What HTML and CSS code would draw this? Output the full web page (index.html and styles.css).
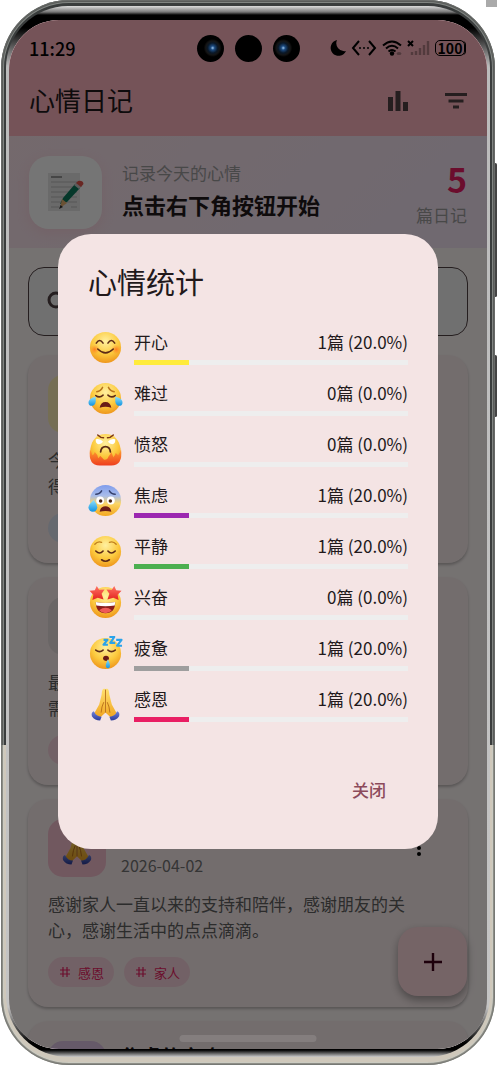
FILE: index.html
```html
<!DOCTYPE html>
<html lang="zh-CN">

<head>
    <meta charset="UTF-8">
    <meta name="viewport" content="width=device-width, initial-scale=1.0">
    <title>心情日记</title>
    <link rel="stylesheet" href="styles.css">
</head>

<body>
<!-- Emoji symbols -->
<svg class="sprites" aria-hidden="true">
    <defs>
        <radialGradient id="gFace" cx="50%" cy="30%" r="70%">
            <stop offset="0" stop-color="#fff0a0"/>
            <stop offset=".6" stop-color="#fcca3e"/>
            <stop offset="1" stop-color="#ee961c"/>
        </radialGradient>
        <radialGradient id="gBlush">
            <stop offset="0" stop-color="#ff6a1a" stop-opacity=".8"/>
            <stop offset="1" stop-color="#ff8a2a" stop-opacity="0"/>
        </radialGradient>
        <linearGradient id="gCold" x1="0" y1="0" x2="0" y2="1">
            <stop offset="0" stop-color="#7f9cec"/>
            <stop offset=".35" stop-color="#a9bdea"/>
            <stop offset=".6" stop-color="#fbd565"/>
            <stop offset="1" stop-color="#f3a820"/>
        </linearGradient>
        <linearGradient id="gRage" x1="0" y1="0" x2="0" y2="1">
            <stop offset="0" stop-color="#ffa030"/>
            <stop offset="1" stop-color="#ee3d1e"/>
        </linearGradient>
        <linearGradient id="gTear" x1="0" y1="0" x2="0" y2="1">
            <stop offset="0" stop-color="#8fe0fb"/>
            <stop offset="1" stop-color="#1294e0"/>
        </linearGradient>
        <linearGradient id="gStar" x1="0" y1="0" x2="0" y2="1">
            <stop offset="0" stop-color="#ff7464"/>
            <stop offset="1" stop-color="#e3221f"/>
        </linearGradient>
        <linearGradient id="gHand" x1="0" y1="0" x2="0" y2="1">
            <stop offset="0" stop-color="#ffe06e"/>
            <stop offset="1" stop-color="#f0a31e"/>
        </linearGradient>
        <linearGradient id="gCuff" x1="0" y1="0" x2="0" y2="1">
            <stop offset="0" stop-color="#6f83dc"/>
            <stop offset="1" stop-color="#2b3a9a"/>
        </linearGradient>
    </defs>

    <symbol id="happy" viewBox="0 0 36 36">
        <circle cx="18" cy="18" r="16" fill="url(#gFace)"/>
        <circle cx="7" cy="20" r="5" fill="url(#gBlush)"/>
        <circle cx="29" cy="20" r="5" fill="url(#gBlush)"/>
        <path d="M8.500 13.500Q12 8 15.500 13.500M20.500 13.500Q24 8 27.500 13.500M10 19.500Q18 27.500 26 19.500" fill="none" stroke="#5c2a16" stroke-width="1.600" stroke-linecap="round"/>
    </symbol>

    <symbol id="sad" viewBox="0 0 36 36">
        <circle cx="18" cy="18" r="16" fill="url(#gFace)"/>
        <path d="M9 11Q13 10.500 15 6.500M27 11Q23 10.500 21 6.500" fill="none" stroke="#b8741c" stroke-width="1.500" stroke-linecap="round"/>
        <path d="M8 15Q12 18 15.500 14.500M28 15Q24 18 20.500 14.500" fill="none" stroke="#5c2a16" stroke-width="1.600" stroke-linecap="round"/>
        <path d="M12 27.500Q13 21.500 18 21.500T24 27.500Q18 25.500 12 27.500Z" fill="#6a1b16"/>
        <path d="M8 16C4 17 .5 19 .5 22.500C1 27 7.500 26.500 8 21Z" fill="url(#gTear)"/>
        <path d="M28 16C32 17 35.500 19 35.500 22.500C35 27 28.500 26.500 28 21Z" fill="url(#gTear)"/>
    </symbol>

    <symbol id="angry" viewBox="0 0 36 36">
        <path d="M18 2C9 2 4 8 2.500 17C1 28 4 33 13 34H23C32 33 35 28 33.500 17C32 8 27 2 18 2Z" fill="url(#gFace)"/>
        <path d="M2 18Q4 21 4.500 24Q6.500 23 7 20.500Q10 23 10.500 27Q12 26 12.500 24.500Q15 27 16.500 28.500Q20 29 21 25.500Q23 23 24 20.500Q25.500 24 26 26Q28 24 28.500 21.500Q30.500 23 31 24Q33 21 34 18Q36 34.500 24 34.500H12Q0 34.500 2 18Z" fill="url(#gRage)"/>
        <path d="M8 7.500Q13 6.500 15.500 10Q14 12.500 11 12.500Q7.500 12 8 7.500ZM28 7.500Q23 6.500 20.500 10Q22 12.500 25 12.500Q28.500 12 28 7.500Z" fill="#fff"/>
        <path d="M10 3Q13 6 16 6M26 3Q23 6 20 6" fill="none" stroke="#7a3414" stroke-width="1.500" stroke-linecap="round"/>
        <path d="M13 20.500Q13.500 15 18 15T23 20.500" fill="none" stroke="#5c2a16" stroke-width="1.800" stroke-linecap="round"/>
    </symbol>

    <symbol id="anxious" viewBox="0 0 36 36">
        <circle cx="18" cy="18" r="16" fill="url(#gCold)"/>
        <path d="M8 11.500Q12 11.500 14 8M28 11.500Q24 11.500 22 8" fill="none" stroke="#35406c" stroke-width="1.500" stroke-linecap="round"/>
        <circle cx="12.500" cy="18" r="4" fill="#fff"/>
        <circle cx="23.500" cy="18" r="4" fill="#fff"/>
        <circle cx="13" cy="18.500" r="1.800" fill="#4a2412"/>
        <circle cx="23" cy="18.500" r="1.800" fill="#4a2412"/>
        <path d="M12 29.500Q13 24 18 24T24 29.500Q18 28 12 29.500Z" fill="#6a1b16"/>
        <path d="M6 17.500Q.500 22 .500 25A4.500 4.500 0 0 0 9.500 25Q9 21 6 17.500Z" fill="url(#gTear)"/>
    </symbol>

    <symbol id="calm" viewBox="0 0 36 36">
        <circle cx="18" cy="18" r="16" fill="url(#gFace)"/>
        <path d="M7 10.500Q10 7 14 8.500M29 10.500Q26 7 22 8.500" fill="none" stroke="#c0801e" stroke-width="1.400" stroke-linecap="round"/>
        <path d="M8 17.500Q12 21.500 15.500 17.500M20.500 17.500Q24 21.500 28 17.500M14 26.500Q18 29.500 22 26.500" fill="none" stroke="#5c2a16" stroke-width="1.700" stroke-linecap="round"/>
    </symbol>

    <symbol id="excited" viewBox="0 0 36 36">
        <circle cx="18" cy="18" r="16" fill="url(#gFace)"/>
        <path d="M8 17.500Q18 19.500 28 17.500Q28 29 18 29T8 17.500Z" fill="#8a1f1c"/>
        <path d="M8 17.500Q18 19.500 28 17.500L27.500 21Q18 22.500 8.500 21Z" fill="#fff"/>
        <path d="M11.500 26Q18 21 24.500 26Q22 29 18 29T11.500 26Z" fill="#ee5a58"/>
        <path d="M9 1L11.500 5L17 4.500L14 9L16 15L10 13L4.500 15.500L5.500 10L1.500 6L7 5.500Z" fill="url(#gStar)"/>
        <path d="M27 1L24.500 5L19 4.500L22 9L20 15L26 13L31.500 15.500L30.500 10L34.500 6L29 5.500Z" fill="url(#gStar)"/>
    </symbol>

    <symbol id="tired" viewBox="0 0 36 36">
        <circle cx="18" cy="18" r="16" fill="url(#gFace)"/>
        <path d="M8 14.500Q12 17.500 15.500 14.500M20.500 14.500Q24 17.500 28 14.500" fill="none" stroke="#5c2a16" stroke-width="1.700" stroke-linecap="round"/>
        <ellipse cx="18.500" cy="23" rx="3" ry="2.600" fill="#6a1b16"/>
        <path d="M20.500 24Q17.500 30 18.500 32Q20.500 34.500 22.500 32Q23 29 20.500 24Z" fill="url(#gTear)"/>
        <path d="M16 4H20L16 9H20.500M22 1H27L23 7H28M29 4H34.500L30 10H35" fill="none" stroke="#2aa3ea" stroke-width="2.200" stroke-linejoin="round"/>
    </symbol>

    <symbol id="thanks" viewBox="0 0 36 36">
        <path d="M17.800 2C15 1.500 14.500 3 14 8L11.500 18L6.500 27L12 32L17.800 26.500Z" fill="url(#gHand)"/>
        <path d="M18.200 2C21 1.500 21.500 3 22 8L24.500 18L29.500 27L24 32L18.200 26.500Z" fill="url(#gHand)"/>
        <path d="M18 3V26M16 16Q14 20 13.500 26M20 16Q22 20 22.500 26" fill="none" stroke="#b46a14" stroke-width=".900" stroke-linecap="round"/>
        <path d="M6 25Q3 26 4 30Q7 34.500 12.500 34.500L14 30.500Q8.500 30.500 6 25Z" fill="url(#gCuff)"/>
        <path d="M30 25Q33 26 32 30Q29 34.500 23.500 34.500L22 30.500Q27.500 30.500 30 25Z" fill="url(#gCuff)"/>
    </symbol>

    <symbol id="hash" viewBox="0 0 14 14">
        <path d="M5 2V12M9 2V12M2 5H12M2 9H12" fill="none" stroke="currentColor" stroke-width="1.200"/>
    </symbol>

    <symbol id="more" viewBox="0 0 20 20">
        <circle cx="10" cy="4" r="2"/>
        <circle cx="10" cy="10" r="2"/>
        <circle cx="10" cy="16" r="2"/>
    </symbol>
</svg>

<div class="edge-mark"></div>
<div class="side-key volume"></div>
<div class="side-key power"></div>

<div class="phone">
    <div class="bezel">
        <div class="screen">
            <header class="header">
                <div class="status-bar">
                    <span class="time">11:29</span>
                    <div class="status-icons">
                        <svg width="16" height="18" viewBox="0 0 16 18"><path d="M7 1A8 8 0 1 0 16 12A8 8 0 0 1 7 1Z"/></svg>
                        <svg width="26" height="18" viewBox="0 0 26 18"><path d="M8 2L2 9L8 16M18 2L24 9L18 16" fill="none" stroke="#000" stroke-width="2"/><circle cx="9" cy="9" r="1"/><circle cx="13" cy="9" r="1"/><circle cx="17" cy="9" r="1"/></svg>
                        <svg width="20" height="18" viewBox="0 0 20 18"><path d="M1 6.500Q10 -1.500 19 6.500M4 9.500Q10 4 16 9.500M6.500 12.500Q10 9.500 13.500 12.500" fill="none" stroke="#000" stroke-width="2"/><circle cx="10" cy="14.500" r="2.200"/><ellipse cx="17" cy="14.500" rx="2.500" ry="1.500" opacity=".3"/></svg>
                        <svg width="23" height="18" viewBox="0 0 23 18"><path d="M1 2L6 7M6 2L1 7" stroke="#000" stroke-width="2"/><path d="M5 13V16M9 12V16M13 9V16M17 6V16M21 2V16" stroke="#000" stroke-width="2.400" opacity=".3"/></svg>
                        <span class="battery">100</span>
                    </div>
                </div>
                <div class="app-bar">
                    <h1>心情日记</h1>
                    <button class="icon-btn" aria-label="心情统计">
                        <svg width="20" height="20" viewBox="0 0 20 20"><path d="M0 6H5V20H0ZM7.500 0H12.500V20H7.500ZM15 11H20V20H15Z"/></svg>
                    </button>
                    <button class="icon-btn" aria-label="筛选">
                        <svg width="22" height="16" viewBox="0 0 22 16"><path d="M0 0H22V3H0ZM3.500 6.500H18.500V9.500H3.500ZM8 12.500H14V15.500H8Z"/></svg>
                    </button>
                </div>
            </header>

            <section class="banner">
                <div class="banner-icon">
                    <svg width="38" height="40" viewBox="0 0 38 40">
                        <rect x="1" y="1" width="32" height="38" fill="#e6e6e6"/>
                        <path d="M4 5H15" stroke="#999" stroke-width="2"/>
                        <path d="M4 10H30M4 15H30M4 20H30M4 25H30M4 30H30M4 35H12M24 35H30" stroke="#bdbdbd"/>
                        <path d="M13 32L16 26L28 12L33 16L20 30Z" fill="#0c7a5c"/>
                        <path d="M13 36L15 27L20 31Z" fill="#e8b070"/>
                        <path d="M12 37L13.500 33L16 35Z" fill="#333"/>
                        <path d="M27 13L30 9.500L35 14L32 17Z" fill="#c8c8c8"/>
                        <path d="M29 11L31 9Q36 8 36.500 12L34 15Z" fill="#e5564c"/>
                    </svg>
                </div>
                <div class="banner-text">
                    <p class="hint">记录今天的心情</p>
                    <h2>点击右下角按钮开始</h2>
                </div>
                <div class="banner-count">
                    <strong>5</strong>
                    <span>篇日记</span>
                </div>
            </section>

            <main class="content">
                <label class="search">
                    <svg width="22" height="22" viewBox="0 0 22 22"><circle cx="9" cy="9" r="7"/><path d="M14 14L20 20"/></svg>
                    <input type="search" aria-label="搜索">
                </label>

                <article class="card">
                    <div class="card-head">
                        <div class="avatar yellow"></div>
                    </div>
                    <p class="card-body">今<br>得</p>
                    <div class="chips"><span class="chip blue"></span></div>
                </article>

                <article class="card">
                    <div class="card-head">
                        <div class="avatar gray"></div>
                    </div>
                    <p class="card-body">最<br>需</p>
                    <div class="chips"><span class="chip"></span></div>
                </article>

                <article class="card">
                    <div class="card-head">
                        <div class="avatar pink"><svg width="36" height="36"><use href="#thanks"/></svg></div>
                        <div class="card-title">
                            <h3></h3>
                            <time>2026-04-02</time>
                        </div>
                        <button class="more-btn" aria-label="更多"><svg width="20" height="20"><use href="#more"/></svg></button>
                    </div>
                    <p class="card-body">感谢家人一直以来的支持和陪伴，感谢朋友的关<br>心，感谢生活中的点点滴滴。</p>
                    <div class="chips">
                        <span class="chip"><svg width="14" height="14"><use href="#hash"/></svg>感恩</span>
                        <span class="chip"><svg width="14" height="14"><use href="#hash"/></svg>家人</span>
                    </div>
                </article>

                <article class="card">
                    <div class="card-head">
                        <div class="avatar purple"></div>
                        <div class="card-title">
                            <h3>焦虑的夜晚</h3>
                        </div>
                    </div>
                </article>
            </main>

            <button class="fab" aria-label="写日记">
                <svg width="18" height="18" viewBox="0 0 18 18"><path d="M9 0V18M0 9H18" stroke="currentColor" stroke-width="2.400"/></svg>
            </button>

            <!-- Statistics dialog -->
            <div class="scrim">
                <div class="dialog" role="dialog" aria-labelledby="statsTitle">
                    <h2 id="statsTitle">心情统计</h2>
                    <ul class="stats">
                        <li class="stat">
                            <svg class="emoji"><use href="#happy"/></svg>
                            <div class="stat-info">
                                <div class="stat-label"><span>开心</span><span>1篇 (20.0%)</span></div>
                                <div class="bar"><div class="fill happy" style="width: 20%"></div></div>
                            </div>
                        </li>
                        <li class="stat">
                            <svg class="emoji"><use href="#sad"/></svg>
                            <div class="stat-info">
                                <div class="stat-label"><span>难过</span><span>0篇 (0.0%)</span></div>
                                <div class="bar"></div>
                            </div>
                        </li>
                        <li class="stat">
                            <svg class="emoji"><use href="#angry"/></svg>
                            <div class="stat-info">
                                <div class="stat-label"><span>愤怒</span><span>0篇 (0.0%)</span></div>
                                <div class="bar"></div>
                            </div>
                        </li>
                        <li class="stat">
                            <svg class="emoji"><use href="#anxious"/></svg>
                            <div class="stat-info">
                                <div class="stat-label"><span>焦虑</span><span>1篇 (20.0%)</span></div>
                                <div class="bar"><div class="fill anxious" style="width: 20%"></div></div>
                            </div>
                        </li>
                        <li class="stat">
                            <svg class="emoji"><use href="#calm"/></svg>
                            <div class="stat-info">
                                <div class="stat-label"><span>平静</span><span>1篇 (20.0%)</span></div>
                                <div class="bar"><div class="fill calm" style="width: 20%"></div></div>
                            </div>
                        </li>
                        <li class="stat">
                            <svg class="emoji"><use href="#excited"/></svg>
                            <div class="stat-info">
                                <div class="stat-label"><span>兴奋</span><span>0篇 (0.0%)</span></div>
                                <div class="bar"></div>
                            </div>
                        </li>
                        <li class="stat">
                            <svg class="emoji"><use href="#tired"/></svg>
                            <div class="stat-info">
                                <div class="stat-label"><span>疲惫</span><span>1篇 (20.0%)</span></div>
                                <div class="bar"><div class="fill tired" style="width: 20%"></div></div>
                            </div>
                        </li>
                        <li class="stat">
                            <svg class="emoji"><use href="#thanks"/></svg>
                            <div class="stat-info">
                                <div class="stat-label"><span>感恩</span><span>1篇 (20.0%)</span></div>
                                <div class="bar"><div class="fill thanks" style="width: 20%"></div></div>
                            </div>
                        </li>
                    </ul>
                    <div class="actions">
                        <button class="close-btn">关闭</button>
                    </div>
                </div>
            </div>

            <div class="cameras">
                <span class="camera lens-right"></span>
                <span class="camera"></span>
                <span class="camera lens-left"></span>
            </div>
            <div class="home-bar"></div>
        </div>
    </div>
</div>
</body>

</html>
```

FILE: styles.css
```css
* {
    box-sizing: border-box;
    margin: 0;
    padding: 0;
}

body {
    font-family: "Noto Sans CJK SC", "Noto Sans", sans-serif;
    background-color: #fff;
    color: #22191b;
    position: relative;
    padding: 0 2px 0 1px;
}

button {
    font: inherit;
    border: none;
    background: none;
    cursor: pointer;
}

svg {
    display: block;
    flex: none;
}

.sprites {
    position: absolute;
    width: 0;
    height: 0;
}

/* Phone frame */
.edge-mark {
    position: absolute;
    top: 0;
    right: 0;
    width: 11px;
    height: 7px;
    background-color: #aaa;
}

.side-key {
    position: absolute;
    right: 0;
    width: 3px;
    border-radius: 2px;
    background-color: #444;
}

.volume {
    top: 163px;
    height: 134px;
}

.power {
    top: 355px;
    height: 62px;
}

.phone {
    position: relative;
    height: 100vh;
    padding: 6px 5px 8px;
    border-radius: 68px;
    background: linear-gradient(#3a3d3d 70%, #cfc8bb 70%);
    box-shadow: inset 0 0 0 1px rgba(110, 112, 110, 0.7), inset 0 0 0 2px rgba(0, 0, 0, 0.3), inset 0 0 0 3px rgba(200, 205, 200, 0.5);
}

.bezel {
    height: 100%;
    padding: 14px 3px 8px;
    border-radius: 62px;
    background: linear-gradient(#ddd 0, #777 6px, #000 9px, #000 22px, #bbb 60px, #c4c4c4 calc(100% - 50px), #000 calc(100% - 14px), #000 calc(100% - 7px), #ccc 100%);
}

.screen {
    position: relative;
    height: 100%;
    display: flex;
    flex-direction: column;
    border-radius: 50px;
    overflow: hidden;
    background-color: #fff8f7;
}

/* Header */
.header {
    background-color: #ffb6c1;
    padding: 0 20px 10px;
}

.status-bar {
    display: flex;
    align-items: center;
    justify-content: space-between;
    height: 56px;
    color: #000;
}

.time {
    font-size: 18px;
    font-weight: 500;
}

.status-icons {
    display: flex;
    align-items: center;
    gap: 5px;
}

.battery {
    width: 30px;
    height: 16px;
    margin-right: 2px;
    border: 1px solid #000;
    border-radius: 5px;
    font-size: 14px;
    font-weight: 700;
    line-height: 14px;
    text-align: center;
    box-shadow: 2px 0 0 -1px #000;
}

.app-bar {
    display: flex;
    align-items: center;
    height: 50px;
}

.app-bar h1 {
    flex: 1;
    font-size: 26px;
    font-weight: 400;
    line-height: 40px;
    padding-bottom: 2px;
}

.icon-btn {
    display: flex;
    align-items: center;
    justify-content: center;
    width: 58px;
    height: 50px;
    fill: #524345;
}

.icon-btn:last-child {
    margin-right: -18px;
}

/* Banner */
.banner {
    display: flex;
    align-items: center;
    gap: 20px;
    height: 112px;
    padding: 0 20px;
    background: linear-gradient(135deg, #fce4ec, #f3e5f5);
}

.banner-icon {
    display: flex;
    align-items: center;
    justify-content: center;
    width: 73px;
    height: 73px;
    border-radius: 20px;
    background-color: #fff;
    box-shadow: 0 4px 12px rgba(255, 182, 193, 0.3);
}

.banner-text {
    flex: 1;
    padding-bottom: 4px;
}

.hint {
    font-size: 17px;
    line-height: 26px;
    color: #9e9e9e;
}

.banner-text h2 {
    font-size: 22px;
    font-weight: 700;
    line-height: 32px;
    margin-top: 2px;
}

.banner-count {
    text-align: right;
    color: #9e9e9e;
    font-size: 17px;
    line-height: 26px;
}

.banner-count strong {
    display: block;
    font-size: 34px;
    line-height: 46px;
    color: #e91e63;
}

/* Diary list */
.content {
    flex: 1;
    min-height: 0;
    padding: 19px 19px 0;
    overflow: hidden;
}

.search {
    display: flex;
    align-items: center;
    gap: 12px;
    height: 69px;
    padding: 0 18px;
    border: 1px solid #524345;
    border-radius: 16px;
    background-color: #f5f5f5;
    margin-bottom: 19px;
}

.search svg {
    fill: none;
    stroke: #524345;
    stroke-width: 3;
}

.search input {
    flex: 1;
    min-width: 0;
    border: none;
    background: none;
    font-size: 17px;
}

.card {
    padding: 20px;
    border-radius: 20px;
    background-color: #fbeeee;
    box-shadow: 0 2px 3px rgba(0, 0, 0, 0.25);
    margin-bottom: 14px;
}

.card-head {
    display: flex;
    gap: 15px;
    height: 58px;
}

.avatar {
    display: flex;
    align-items: center;
    justify-content: center;
    width: 58px;
    height: 58px;
    border-radius: 15px;
}

.yellow {
    background-color: #fff0b8;
}

.gray {
    background-color: #e8dfdf;
}

.pink {
    background-color: #f6c0d0;
}

.purple {
    background-color: #dfc4e4;
}

.card-title {
    flex: 1;
    padding-top: 2px;
}

.card-title h3 {
    font-size: 20px;
    font-weight: 700;
    line-height: 28px;
    min-height: 28px;
}

.card-title time {
    display: block;
    margin-top: 4px;
    font-size: 16px;
    line-height: 24px;
    color: #757575;
}

.more-btn {
    display: flex;
    align-items: center;
    justify-content: center;
    width: 58px;
    height: 58px;
}

.card-body {
    margin: 14px 0;
    font-size: 17px;
    line-height: 26px;
    color: #616161;
}

.chips {
    display: flex;
    gap: 10px;
}

.chip {
    display: flex;
    align-items: center;
    gap: 6px;
    min-width: 66px;
    height: 30px;
    padding: 0 10px;
    border-radius: 15px;
    font-size: 13px;
    color: #e91e63;
    background-color: #f9d4de;
}

.blue {
    background-color: #dfe4f2;
}

.fab {
    position: absolute;
    right: 20px;
    bottom: 53px;
    display: flex;
    align-items: center;
    justify-content: center;
    width: 69px;
    height: 69px;
    border-radius: 20px;
    color: #3f0018;
    background-color: #ffd9df;
    box-shadow: 0 4px 8px rgba(0, 0, 0, 0.35);
}

/* Dialog */
.scrim {
    position: absolute;
    inset: 0;
    display: flex;
    align-items: center;
    justify-content: center;
    padding: 14px 49px 0;
    background-color: rgba(0, 0, 0, 0.54);
}

.dialog {
    width: 100%;
    padding: 27px 30px 40px;
    border-radius: 33px;
    background-color: #f4e4e4;
}

.dialog h2 {
    font-size: 29px;
    font-weight: 400;
    line-height: 40px;
    margin-bottom: 29px;
}

.stats {
    display: flex;
    flex-direction: column;
    gap: 16px;
    list-style: none;
}

.stat {
    display: flex;
    gap: 11px;
}

.emoji {
    width: 35px;
    height: 35px;
}

.stat-info {
    flex: 1;
}

.stat-label {
    display: flex;
    justify-content: space-between;
    font-size: 17px;
    line-height: 24px;
    margin-bottom: 6px;
}

.bar {
    height: 5px;
    background-color: #eee;
}

.fill {
    height: 100%;
}

.fill.happy {
    background-color: #ffeb3b;
}

.fill.anxious {
    background-color: #9c27b0;
}

.fill.calm {
    background-color: #4caf50;
}

.fill.tired {
    background-color: #9e9e9e;
}

.fill.thanks {
    background-color: #e91e63;
}

.actions {
    display: flex;
    justify-content: flex-end;
    margin-top: 47px;
}

.close-btn {
    height: 40px;
    padding: 0 22px;
    font-size: 17px;
    font-weight: 500;
    color: #8c4a5b;
}

/* System overlays */
.cameras {
    position: absolute;
    top: 15px;
    left: 0;
    right: 0;
    display: flex;
    justify-content: center;
    gap: 11px;
}

.camera {
    width: 27px;
    height: 27px;
    border-radius: 50%;
    background-color: #000;
}

.lens-right {
    background: radial-gradient(circle at 58% 48%, #9cc8f0 0, #1c4a80 2px, #0a1828 5px, #151515 7px, #000 9px);
}

.lens-left {
    background: radial-gradient(circle at 38% 48%, #9cc8f0 0, #1c4a80 2px, #0a1828 5px, #151515 7px, #000 9px);
}

.home-bar {
    position: absolute;
    bottom: 7px;
    left: 50%;
    width: 137px;
    height: 7px;
    border-radius: 4px;
    background-color: rgba(255, 255, 255, 0.12);
    transform: translateX(-50%);
}
```
